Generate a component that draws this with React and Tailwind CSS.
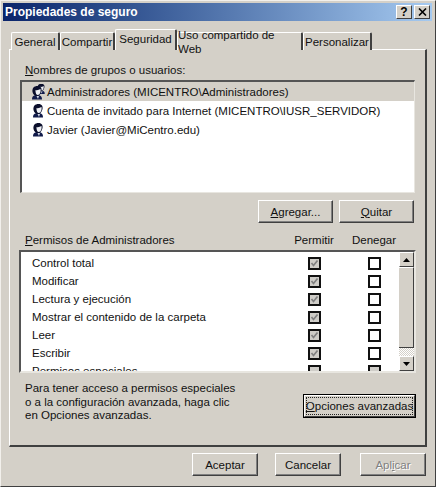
const FONT = "font-['Liberation_Sans',Arial,sans-serif]";

function Btn({ w, children, disabled, focus }) {
  return (
    <div className={`box-border ${w} h-[23px] flex items-center justify-center bg-[#d4d0c8] border-t border-l border-t-white border-l-white border-r border-b border-r-[#404040] border-b-[#404040] shadow-[inset_-1px_-1px_0_#808080] ${disabled ? "text-[#808080] [text-shadow:1px_1px_0_#fff]" : "text-[#111]"}`}>
      {children}
    </div>
  );
}

function Person({ double }) {
  const one = (
    <>
      <path d="M3 14.5 C3 11 5 10 8 10 C11 10 13 11 13 14.5 Z" fill="#101a4a" />
      <path d="M3.5 7 C3 3 5 1 8.5 1 C12 1 13 3.5 12.5 6 C12 9 10 11 8 11 C6 11 4 9.5 3.5 7 Z" fill="#0b0f2c" />
      <path d="M6.5 5 C8 5.5 10 5 11.5 4 C12 6.5 11 10 8.8 10 C7.5 10 6.3 8 6.5 5 Z" fill="#eef0f4" />
      <path d="M7.5 11 L10 11 L9 14 Z" fill="#d8dce8" />
    </>
  );
  if (double) {
    return (
      <svg width="18" height="16" viewBox="0 0 18 16" className="shrink-0">
        <g transform="translate(6 -1) scale(.75)">{one}</g>
        <g transform="translate(0 1)">{one}</g>
      </svg>
    );
  }
  return (
    <svg width="16" height="16" viewBox="0 0 16 16" className="shrink-0">
      {one}
    </svg>
  );
}

function UserRow({ double, selected, children }) {
  return (
    <div className={`h-[19px] flex items-center pl-[6px] ${selected ? "bg-[#d4d0c8]" : ""}`}>
      <div className="w-[19px] flex justify-center"><Person double={double} /></div>
      <span className="whitespace-nowrap">{children}</span>
    </div>
  );
}

function Check({ on, gray }) {
  return (
    <div className={`box-border w-[13px] h-[13px] border-2 border-[#111] flex items-center justify-center ${gray ? "bg-[#cfcdc8]" : "bg-white"}`}>
      {on && (
        <svg width="9" height="9" viewBox="0 0 9 9">
          <path d="M1.5 4 L3.5 6.5 L7.5 1.5" fill="none" stroke="#808080" strokeWidth="1.7" />
        </svg>
      )}
    </div>
  );
}

function PermRow({ label, allowGray = true, on = true, denyGray }) {
  return (
    <div className="h-[18px] flex items-center shrink-0">
      <div className="box-border w-[287px] pl-[11px] whitespace-nowrap">{label}</div>
      <Check on={on} gray={allowGray} />
      <div className="w-[47px]" />
      <Check gray={denyGray} />
    </div>
  );
}

function Tab({ w, active, children }) {
  return (
    <div className={`box-border ${w} flex items-center justify-center border-l border-t border-l-white border-t-white border-r-2 border-r-[#404040] rounded-t-[2px] bg-[#d4d0c8] ${active ? "h-[21px] relative z-10 pb-[3px]" : "h-[18px]"}`}>
      {children}
    </div>
  );
}

function ScrollBtn({ up }) {
  return (
    <div className="box-border w-[15px] h-[15px] shrink-0 flex items-center justify-center bg-[#d4d0c8] border-t border-l border-t-white border-l-white border-r border-b border-r-[#404040] border-b-[#404040]">
      <svg width="7" height="4" viewBox="0 0 7 4">
        <path d={up ? "M3.5 0 L7 4 L0 4 Z" : "M0 0 L7 0 L3.5 4 Z"} fill="#000" />
      </svg>
    </div>
  );
}

export default function App() {
  return (
    <div className={`box-border w-[436px] h-[487px] p-[3px] bg-[#d4d0c8] border-t border-l border-t-[#f2f0ec] border-l-[#f2f0ec] border-r border-b border-r-[#404040] border-b-[#404040] text-[11.5px] leading-[14px] text-[#111] overflow-hidden ${FONT}`}>
      <div className="h-[18px] -mt-px -ml-px flex items-center justify-between bg-gradient-to-r from-[#0a246a] to-[#a6caf0] pl-[2px] pr-[2px]">
        <span className="text-white font-bold text-[12px]">Propiedades de seguro</span>
        <div className="flex gap-[2px]">
          <div className="box-border w-[16px] h-[14px] flex items-center justify-center bg-[#d4d0c8] border-t border-l border-t-white border-l-white border-r border-b border-r-[#404040] border-b-[#404040] font-bold text-[12px] text-black">?</div>
          <div className="box-border w-[16px] h-[14px] flex items-center justify-center bg-[#d4d0c8] border-t border-l border-t-white border-l-white border-r border-b border-r-[#404040] border-b-[#404040]">
            <svg width="9" height="8" viewBox="0 0 9 8"><path d="M1 0.5 L8 7.5 M8 0.5 L1 7.5" stroke="#000" strokeWidth="1.6" /></svg>
          </div>
        </div>
      </div>

      <div className="ml-[7px] mt-[8px] flex items-end h-[21px] -mb-px relative z-10">
        <Tab w="w-[49px]">General</Tab>
        <Tab w="w-[55px]">Compartir</Tab>
        <Tab w="w-[62px]" active>Seguridad</Tab>
        <Tab w="w-[126px]">Uso compartido de Web</Tab>
        <Tab w="w-[69px]">Personalizar</Tab>
      </div>

      <div className="box-border ml-[5px] w-[418px] h-[398px] pt-[13px] pl-[10px] bg-[#d4d0c8] border-t border-l border-t-white border-l-white border-r-2 border-b-2 border-r-[#404040] border-b-[#404040]">
        <div className="ml-[5px] h-[14px]"><u>N</u>ombres de grupos o usuarios:</div>

        <div className="box-border mt-[3px] w-[395px] h-[113px] bg-white border-t-2 border-l-2 border-t-[#555] border-l-[#555] border-r border-b border-r-[#e8e6e0] border-b-[#e8e6e0]">
          <UserRow double selected>Administradores (MICENTRO\Administradores)</UserRow>
          <UserRow>Cuenta de invitado para Internet (MICENTRO\IUSR_SERVIDOR)</UserRow>
          <UserRow>Javier (Javier@MiCentro.edu)</UserRow>
        </div>

        <div className="mt-[7px] w-[395px] flex justify-end gap-[6px] pr-px">
          <Btn w="w-[75px]"><span><u>A</u>gregar...</span></Btn>
          <Btn w="w-[75px]"><span><u>Q</u>uitar</span></Btn>
        </div>

        <div className="mt-[10px] h-[14px] flex">
          <div className="ml-[5px] w-[259px]"><u>P</u>ermisos de Administradores</div>
          <div className="w-[60px] text-center">Permitir</div>
          <div className="w-[60px] text-center">Denegar</div>
        </div>

        <div className="box-border mt-[3px] -ml-px w-[397px] h-[123px] flex bg-white border-t-2 border-l-2 border-t-[#555] border-l-[#555] border-r-2 border-b-2 border-r-[#e8e6e0] border-b-[#e8e6e0]">
          <div className="flex-1 pt-[2px] flex flex-col overflow-hidden h-[119px]">
            <PermRow label="Control total" />
            <PermRow label="Modificar" />
            <PermRow label="Lectura y ejecución" />
            <PermRow label="Mostrar el contenido de la carpeta" />
            <PermRow label="Leer" />
            <PermRow label="Escribir" />
            <PermRow label="Permisos especiales" on={false} denyGray />
          </div>
          <div className="w-[15px] h-[119px] flex flex-col shrink-0">
            <ScrollBtn up />
            <div className="box-border h-[81px] shrink-0 bg-[#d4d0c8] border-t border-t-white border-r border-b border-r-[#404040] border-b-[#404040]" />
            <div className="flex-1 bg-[repeating-conic-gradient(#d4d0c8_0%_25%,#ffffff_0%_50%)] bg-[length:2px_2px]" />
            <ScrollBtn />
          </div>
        </div>

        <div className="mt-[9px] w-[395px] flex justify-between items-start">
          <div className="ml-[5px] leading-[13.5px]">
            Para tener acceso a permisos especiales<br />
            o a la configuración avanzada, haga clic<br />
            en Opciones avanzadas.
          </div>
          <div className="box-border mt-[12px] w-[113px] h-[24px] -mr-px border border-black">
            <div className="box-border h-full flex items-center justify-center border-t border-l border-t-white border-l-white border-r border-b border-r-[#404040] border-b-[#404040] p-px">
              <div className="w-full h-full flex items-center justify-center border border-dotted border-[#222]"><span className="whitespace-nowrap"><u>O</u>pciones avanzadas</span></div>
            </div>
          </div>
        </div>
      </div>

      <div className="mt-[6px] ml-[188px] flex">
        <Btn w="w-[66px]">Aceptar</Btn>
        <div className="w-[17px]" />
        <Btn w="w-[66px]">Cancelar</Btn>
        <div className="w-[19px]" />
        <Btn w="w-[66px]" disabled><span>Apl<u>i</u>car</span></Btn>
      </div>
    </div>
  );
}
